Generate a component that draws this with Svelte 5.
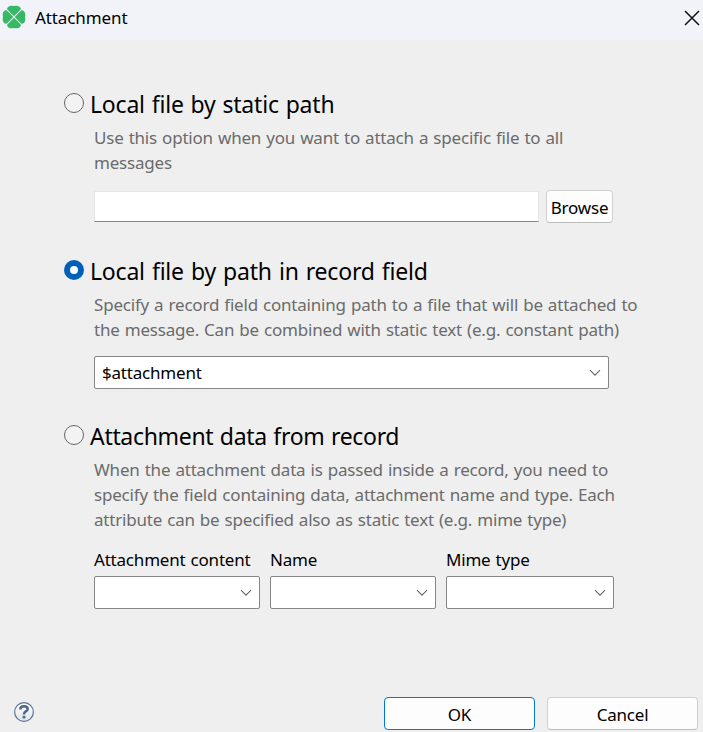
<script>
    let selected = $state('field');
    let staticPath = $state('');
    let fieldPath = $state('$attachment');

    const dataFields = ['Attachment content', 'Name', 'Mime type'];
</script>

{#snippet chevron()}
    <svg class="chevron" width="12" height="8" viewBox="0 0 12 8">
        <path d="M1 1.2 L6 6.2 L11 1.2" fill="none" stroke="#666" stroke-width="1.1" />
    </svg>
{/snippet}

<div class="dialog">
    <header class="titlebar">
        <svg class="logo" width="24" height="24" viewBox="0 0 24 24">
            <g fill="#37b864">
                <path d="M12 11.3 L5.3 4.6 C4.6 3.2 6.6 .9 9 .7 Q11 .6 12 1 Q13 .6 15 .7 C17.4 .9 19.4 3.2 18.7 4.6 Z" />
                <path d="M12 12.7 L5.3 19.4 C4.6 20.8 6.6 23.1 9 23.3 Q11 23.4 12 23 Q13 23.4 15 23.3 C17.4 23.1 19.4 20.8 18.7 19.4 Z" />
                <path d="M11.3 12 L4.6 5.3 C3.2 4.6 .9 6.6 .7 9 Q.6 11 1 12 Q.6 13 .7 15 C.9 17.4 3.2 19.4 4.6 18.7 Z" />
                <path d="M12.7 12 L19.4 5.3 C20.8 4.6 23.1 6.6 23.3 9 Q23.4 11 23 12 Q23.4 13 23.3 15 C23.1 17.4 20.8 19.4 19.4 18.7 Z" />
            </g>
        </svg>
        <span class="title">Attachment</span>
        <button class="close" aria-label="Close">
            <svg width="16" height="16" viewBox="0 0 16 16">
                <path d="M1 1 L15 15 M15 1 L1 15" stroke="#111" stroke-width="1.5" />
            </svg>
        </button>
    </header>

    <main class="content">
        <section class="option static">
            <label class="heading">
                <input type="radio" value="static" bind:group={selected}>
                <span>Local file by static path</span>
            </label>
            <div class="details">
                <p>
                    Use this option when you want to attach a specific file to all<br>
                    messages
                </p>
                <div class="path-row">
                    <input type="text" class="path" aria-label="Path" bind:value={staticPath}>
                    <button class="btn browse">Browse</button>
                </div>
            </div>
        </section>

        <section class="option field">
            <label class="heading">
                <input type="radio" value="field" bind:group={selected}>
                <span>Local file by path in record field</span>
            </label>
            <div class="details">
                <p>
                    Specify a record field containing path to a file that will be attached to<br>
                    the message. Can be combined with static text (e.g. constant path)
                </p>
                <div class="combo wide">
                    <span>{fieldPath}</span>
                    {@render chevron()}
                </div>
            </div>
        </section>

        <section class="option data">
            <label class="heading">
                <input type="radio" value="data" bind:group={selected}>
                <span>Attachment data from record</span>
            </label>
            <div class="details">
                <p>
                    When the attachment data is passed inside a record, you need to<br>
                    specify the field containing data, attachment name and type. Each<br>
                    attribute can be specified also as static text (e.g. mime type)
                </p>
                <div class="columns">
                    {#each dataFields as name}
                        <div class="column">
                            <span class="caption">{name}</span>
                            <div class="combo">{@render chevron()}</div>
                        </div>
                    {/each}
                </div>
            </div>
        </section>
    </main>

    <footer class="footer">
        <svg class="help" width="22" height="22" viewBox="0 0 22 22">
            <defs>
                <linearGradient id="helpFill" x1="0" y1="0" x2="0" y2="1">
                    <stop offset="0" stop-color="#fff" />
                    <stop offset="1" stop-color="#dfe3e8" />
                </linearGradient>
            </defs>
            <circle cx="11" cy="11" r="9.4" fill="url(#helpFill)" stroke="#5b7396" stroke-width="1.2" />
            <path d="M7.3 8.4 Q7.3 5.2 11 5.2 Q14.7 5.2 14.7 8 Q14.7 9.4 12.8 10.4 Q11 11.4 11 13.4" fill="none" stroke="#4d668b" stroke-width="2.5" />
            <rect x="9.6" y="14.8" width="2.8" height="2.6" fill="#4d668b" />
        </svg>
        <button class="btn ok">OK</button>
        <button class="btn cancel">Cancel</button>
    </footer>
</div>

<style>
    .dialog {
        width: 703px;
        height: 732px;
        display: flex;
        flex-direction: column;
        overflow: hidden;
        background: #efefef;
        color: #000;
        font-family: "Noto Sans", "Open Sans", sans-serif;
        font-size: 17px;
        letter-spacing: -0.2px;
        word-spacing: 0.85px;
        line-height: 25px;
    }

    .titlebar {
        height: 40px;
        box-sizing: border-box;
        display: flex;
        align-items: flex-start;
        padding: 5px 3px 0 2px;
        background: #f1f3f9;
    }

    .title {
        flex: 1;
        margin-left: 9px;
        letter-spacing: -0.1px;
    }

    .close {
        display: flex;
        padding: 5px 0 0;
        border: none;
        background: none;
    }

    .content {
        flex: 1;
        padding: 48px 0 0 64px;
    }

    .option.static {
        height: 167px;
    }

    .option.field {
        height: 165px;
    }

    .heading {
        display: flex;
        height: 32px;
        font-size: 23px;
        line-height: 33px;
        word-spacing: 1.1px;
        white-space: nowrap;
    }

    .field .heading {
        word-spacing: 1.3px;
    }

    .data .heading {
        letter-spacing: -0.31px;
        word-spacing: 0.8px;
    }

    .heading input {
        appearance: none;
        flex: none;
        width: 20px;
        height: 20px;
        box-sizing: border-box;
        margin: 5px 6px 0 0;
        border: 1px solid #666;
        border-radius: 50%;
        background: #f3f3f3;
    }

    .heading input:checked {
        border: 6px solid #005fb8;
        background: #fff;
    }

    .details {
        padding: 5px 0 0 30px;
    }

    p {
        margin: 0;
        color: #6b6b6b;
        white-space: nowrap;
    }

    .path-row {
        display: flex;
        align-items: center;
        gap: 7px;
        margin-top: 15px;
    }

    .path {
        width: 445px;
        height: 31px;
        box-sizing: border-box;
        padding: 0 8px;
        border: 1px solid #e6e6e6;
        border-bottom-color: #868686;
        background: #fff;
        font: inherit;
    }

    .btn {
        height: 33px;
        box-sizing: border-box;
        padding: 2px 0 0;
        border: 1px solid #d0d0d0;
        border-bottom-color: #bcbcbc;
        border-radius: 4px;
        background: #fdfdfd;
        color: #000;
        font: inherit;
        letter-spacing: inherit;
    }

    .browse {
        width: 67px;
    }

    .combo {
        display: flex;
        align-items: center;
        justify-content: flex-end;
        height: 33px;
        box-sizing: border-box;
        padding: 0 7px;
        border: 1px solid #868686;
        border-radius: 2px;
        background: #fff;
    }

    .combo.wide {
        width: 515px;
        margin-top: 14px;
        justify-content: space-between;
    }

    .columns {
        display: grid;
        grid-template-columns: 166px 166px 168px;
        gap: 10px;
        margin-top: 15px;
    }

    .caption {
        display: block;
        height: 29px;
        white-space: nowrap;
    }

    .footer {
        display: flex;
        align-items: flex-start;
        height: 35px;
        padding: 0 5px 0 13px;
    }

    .help {
        margin: 4px auto 0 0;
    }

    .ok,
    .cancel {
        width: 151px;
    }

    .ok {
        margin-right: 12px;
        border-color: #0078d4;
    }
</style>
